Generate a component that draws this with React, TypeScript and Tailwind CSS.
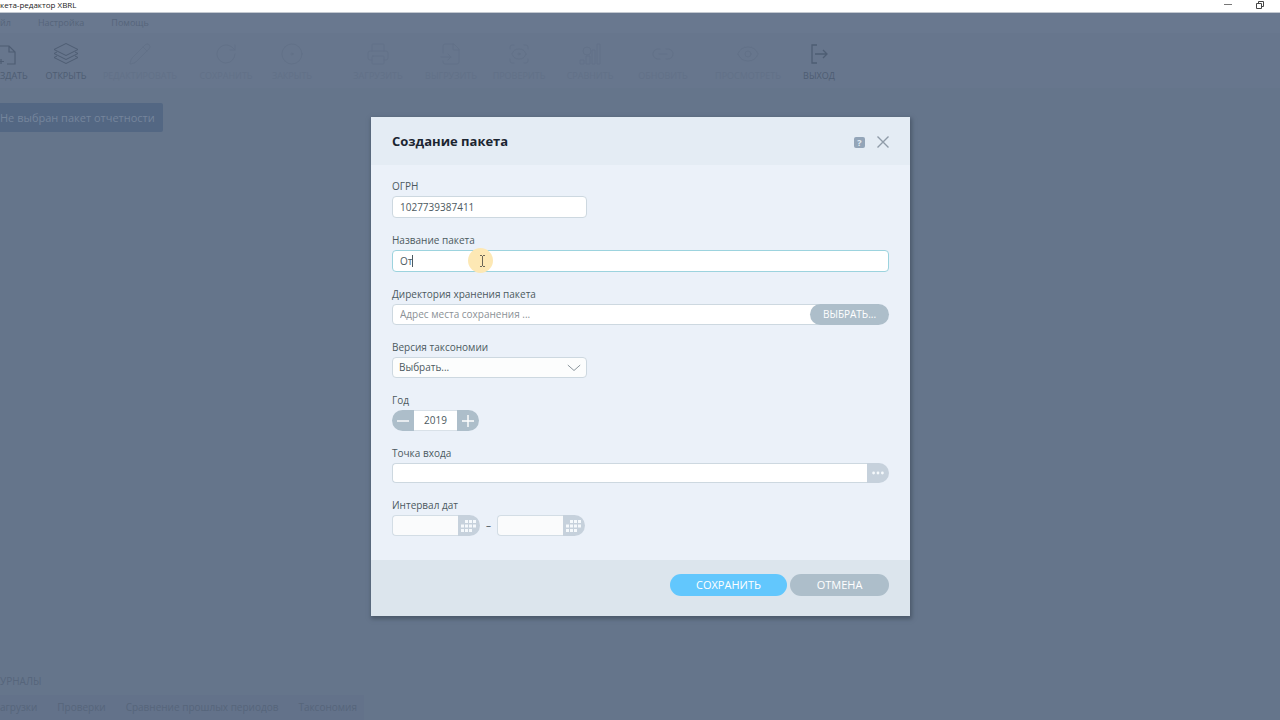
import { useState } from "react";
import type { ReactNode } from "react";
import {
  CircleDot,
  Eye,
  FileInput,
  Link2,
  Pencil,
  Printer,
  RotateCw,
  ScanEye,
} from "lucide-react";

const LayersIcon = () => (
  <svg viewBox="0 0 26 24" className="h-6 w-[26px]" fill="none" stroke="currentColor" strokeLinejoin="round">
    <path d="M13 1.5 25 7.5 13 13.5 1 7.5Z" />
    <path d="M4 10 1 11.5 13 17.5 25 11.5 22 10" />
    <path d="M4 14 1 15.5 13 21.5 25 15.5 22 14" />
  </svg>
);

const ExitIcon = () => (
  <svg viewBox="0 0 20 24" className="h-6 w-5" fill="none" stroke="currentColor" strokeWidth="1.3">
    <path d="M8 3H3v18h5" />
    <path d="M6 12h12M14 8l4 4-4 4" />
  </svg>
);

const NewFileIcon = () => (
  <svg viewBox="0 0 16 24" className="h-6 w-4" fill="none" stroke="currentColor" strokeWidth="1.2">
    <path d="M0 4h9l6 6v12H7M9 4v6h6M0 19.500h4M1 17v5" />
  </svg>
);

const SignalIcon = () => (
  <svg viewBox="0 0 24 24" className="size-6" fill="none" stroke="currentColor">
    <path d="M2 22v-4h4v4zM8 22v-8h4v8zM14 22V8h3v14zM19 22V2h3v20z" />
    <circle cx="9" cy="9" r="4" />
  </svg>
);

const tools: { label: string; icon: ReactNode; width: string; enabled?: boolean }[] = [
  { label: "Открыть", icon: <LayersIcon />, width: "w-[60px]", enabled: true },
  { label: "Редактировать", icon: <Pencil strokeWidth={1} />, width: "w-[88px]" },
  { label: "Сохранить", icon: <RotateCw strokeWidth={1} />, width: "w-[84px]" },
  { label: "Закрыть", icon: <CircleDot strokeWidth={1} />, width: "w-[48px]" },
  { label: "Загрузить", icon: <Printer strokeWidth={1} />, width: "w-[72px] ml-[26px]" },
  { label: "Выгрузить", icon: <FileInput strokeWidth={1} />, width: "w-[74px]" },
  { label: "Проверить", icon: <ScanEye strokeWidth={1} />, width: "w-[62px]" },
  { label: "Сравнить", icon: <SignalIcon />, width: "w-[80px]" },
  { label: "Обновить", icon: <Link2 strokeWidth={1} />, width: "w-[66px]" },
  { label: "Просмотреть", icon: <Eye strokeWidth={1} />, width: "w-[104px]" },
  { label: "Выход", icon: <ExitIcon />, width: "w-[38px]", enabled: true },
];

function Field({ id, label, children }: { id: string; label: string; children: ReactNode }) {
  return (
    <div>
      <label htmlFor={id} className="block h-5 leading-5">
        {label}
      </label>
      {children}
    </div>
  );
}

const inputClass = "border border-[#cdd8e0] bg-white px-[7px] outline-none placeholder:text-[#8b9196]";

function DateInput({ id, label }: { id: string; label: string }) {
  return (
    <div className="flex h-[21px]">
      <input id={id} aria-label={label} className="w-[66px] rounded-l border border-r-0 border-[#d3dde5] bg-[#fafbfc] px-[7px] outline-none" />
      <button type="button" aria-label="Календарь" className="flex w-[22px] items-center justify-center rounded-r-full bg-[#c6d1dc]">
        <svg viewBox="0 0 16 12" className="h-3 w-4" fill="#f5f9fc">
          <path d="M4 0h3v3H4zM8 0h3v3H8zM12 0h3v3h-3zM0 4.500h3v3H0zM4 4.500h3v3H4zM8 4.500h3v3H8zM12 4.500h3v3h-3zM0 9h3v3H0zM4 9h3v3H4zM8 9h3v3H8z" />
        </svg>
      </button>
    </div>
  );
}

function PackageDialog() {
  const [ogrn, setOgrn] = useState("1027739387411");
  const [name, setName] = useState("От");
  const [year, setYear] = useState(2019);

  return (
    <form
      role="dialog"
      aria-labelledby="dialog-title"
      className="w-[539px] bg-[#ebf1f9] text-[10px] text-[#4c5960] shadow-[1px_2px_4px_1px_#4b596b]"
    >
      <header className="flex h-12 items-center bg-[#e4ecf4] px-[21px] pt-[2px]">
        <h1 id="dialog-title" className="text-[13px] font-bold text-[#1b2530]">
          Создание пакета
        </h1>
        <button type="button" aria-label="Справка" className="mr-3 ml-auto flex size-[11px] items-center justify-center rounded-[2px] bg-[#93a5b8] text-[9px] font-bold leading-none text-[#e4ecf4]">
          ?
        </button>
        <button type="button" aria-label="Закрыть">
          <svg viewBox="0 0 12 12" className="size-3" stroke="#8f9ba8" strokeWidth="1.4">
            <path d="M.5.5l11 11M11.500.5l-11 11" />
          </svg>
        </button>
      </header>

      <div className="flex flex-col gap-3 px-[21px] pt-[11px] pb-6">
        <Field id="ogrn" label="ОГРН">
          <input id="ogrn" value={ogrn} onChange={(e) => setOgrn(e.target.value)} className={`${inputClass} block h-[22px] w-[195px] rounded`} />
        </Field>

        <Field id="name" label="Название пакета">
          <div className="relative">
            <input
              id="name"
              value={name}
              onChange={(e) => setName(e.target.value)}
              className="block h-[22px] w-full rounded border border-[#9cd3de] bg-white px-[7px] outline-none"
            />
            <span className="absolute top-[5px] left-5 h-3 w-px bg-[#4c5960]" />
            {/* mouse pointer with its highlight */}
            <span className="absolute -top-[2px] left-[76px] flex size-[25px] items-center justify-center rounded-full bg-[#fde8b4]">
              <svg viewBox="0 0 7 12" className="mr-px ml-1 h-3 w-[7px]" fill="none" stroke="#6b6656">
                <path d="M1 .5h2M4 .5h2M3.500 1v10M1 11.500h2M4 11.500h2" />
              </svg>
            </span>
          </div>
        </Field>

        <Field id="dir" label="Директория хранения пакета">
          <div className="flex h-[21px]">
            <input id="dir" placeholder="Адрес места сохранения ..." className={`${inputClass} -mr-3 min-w-0 flex-1 rounded-l`} />
            <button type="button" className="w-[79px] rounded-full bg-[#adbeca] text-white">
              ВЫБРАТЬ...
            </button>
          </div>
        </Field>

        <Field id="version" label="Версия таксономии">
          <div className="relative w-[195px]">
            <select id="version" className="block h-[21px] w-full appearance-none rounded border border-[#cdd8e0] bg-[#fcfdfd] px-[6px] outline-none">
              <option>Выбрать...</option>
            </select>
            <svg viewBox="0 0 14 8" className="pointer-events-none absolute top-[7px] right-[6px] h-2 w-[14px]" fill="none" stroke="#8b969d">
              <path d="M.8 1 7 6.500 13.200 1" />
            </svg>
          </div>
        </Field>

        <Field id="year" label="Год">
          <div className="flex h-[21px]">
            <button type="button" aria-label="Уменьшить" onClick={() => setYear(year - 1)} className="flex w-[22px] items-center justify-center rounded-l-full bg-[#adbeca]">
              <svg viewBox="0 0 12 12" className="size-3" stroke="white" strokeWidth="1.4">
                <path d="M0 6h12" />
              </svg>
            </button>
            <input
              id="year"
              value={year}
              onChange={(e) => setYear(Number(e.target.value) || 0)}
              className="w-[43px] border-y border-[#d9e1e8] bg-white text-center outline-none"
            />
            <button type="button" aria-label="Увеличить" onClick={() => setYear(year + 1)} className="flex w-[22px] items-center justify-center rounded-r-full bg-[#adbeca]">
              <svg viewBox="0 0 12 12" className="size-3" stroke="white" strokeWidth="1.4">
                <path d="M0 6h12M6 0v12" />
              </svg>
            </button>
          </div>
        </Field>

        <Field id="entry" label="Точка входа">
          <div className="flex h-5">
            <input id="entry" className={`${inputClass} min-w-0 flex-1 rounded-l border-r-0`} />
            <button type="button" aria-label="Выбрать точку входа" className="flex w-[22px] items-center justify-center rounded-r-full bg-[#c6d1dc]">
              <svg viewBox="0 0 12 4" className="h-1 w-3" fill="#f5f9fc">
                <circle cx="1.600" cy="2" r="1.400" />
                <circle cx="6" cy="2" r="1.400" />
                <circle cx="10.400" cy="2" r="1.400" />
              </svg>
            </button>
          </div>
        </Field>

        <Field id="date-from" label="Интервал дат">
          <div className="flex items-center gap-[6px]">
            <DateInput id="date-from" label="Дата начала" />
            <span>–</span>
            <DateInput id="date-to" label="Дата окончания" />
          </div>
        </Field>
      </div>

      <footer className="flex h-14 items-start justify-end gap-[3px] bg-[#dce5ed] px-[21px] pt-[14px] text-[11px] text-white">
        <button type="submit" className="h-[22px] w-[117px] rounded-full bg-[#62c7fd]">
          СОХРАНИТЬ
        </button>
        <button type="button" className="h-[22px] w-[99px] rounded-full bg-[#adbeca]">
          ОТМЕНА
        </button>
      </footer>
    </form>
  );
}

export default function App() {
  return (
    <div className="flex h-screen flex-col overflow-hidden bg-[#65758b] font-['Open_Sans',sans-serif]">
      <div className="flex h-[13px] shrink-0 items-center justify-between border-b border-[#c3c9d1] bg-white pr-4 pb-[2px] text-[8px] leading-none text-[#222]">
        <span>кета-редактор XBRL</span>
        <div className="flex items-center gap-6">
          <button type="button" aria-label="Свернуть">
            <svg viewBox="0 0 8 8" className="size-2" stroke="#777">
              <path d="M0 3.500h8" />
            </svg>
          </button>
          <button type="button" aria-label="Развернуть">
            <svg viewBox="0 0 8 8" className="size-2" fill="none" stroke="#444">
              <path d="M.5 2.500h5v5h-5zM2.500 2.500v-2h5v5h-2" />
            </svg>
          </button>
        </div>
      </div>

      <div className="relative min-h-0 flex-1">
        {/* the window behind the dialog, dimmed */}
        <div className="flex h-full flex-col text-[#56657b]">
          <nav className="flex h-5 shrink-0 items-center gap-[27px] bg-[#69788f] text-[9px]">
            <a href="#file">йл</a>
            <a href="#settings">Настройка</a>
            <a href="#help">Помощь</a>
          </nav>
          <div className="flex h-[55px] shrink-0 bg-[#67768d] pt-[9px] text-[9px] leading-3">
            <button type="button" className="flex w-9 shrink-0 flex-col items-start gap-1 text-[#4e5d73] uppercase">
              <NewFileIcon />
              <span>здать</span>
            </button>
            {tools.map((tool) => (
              <button
                key={tool.label}
                type="button"
                disabled={!tool.enabled}
                className={`flex shrink-0 flex-col items-center gap-1 whitespace-nowrap uppercase ${tool.width} ${
                  tool.enabled ? "text-[#4e5d73]" : "text-[#627188]"
                }`}
              >
                {tool.icon}
                <span>{tool.label}</span>
              </button>
            ))}
          </div>
          <div className="mt-[15px] w-[163px] rounded-r-[2px] bg-[#536783] py-1 pr-[10px] text-right text-[11px] leading-[21px] whitespace-nowrap text-[#75859c]">
            Не выбран пакет отчетности
          </div>
          <div className="mt-auto text-[10px]">УРНАЛЫ</div>
          <div className="mt-[6px] flex h-[25px] w-[364px] items-center justify-between bg-[#63728a] pr-[7px] text-[10px] whitespace-nowrap">
            <a href="#uploads">агрузки</a>
            <a href="#checks">Проверки</a>
            <a href="#periods">Сравнение прошлых периодов</a>
            <a href="#taxonomy">Таксономия</a>
          </div>
        </div>

        <div className="absolute inset-0 flex items-center justify-center pl-px">
          <PackageDialog />
        </div>
      </div>
    </div>
  );
}
